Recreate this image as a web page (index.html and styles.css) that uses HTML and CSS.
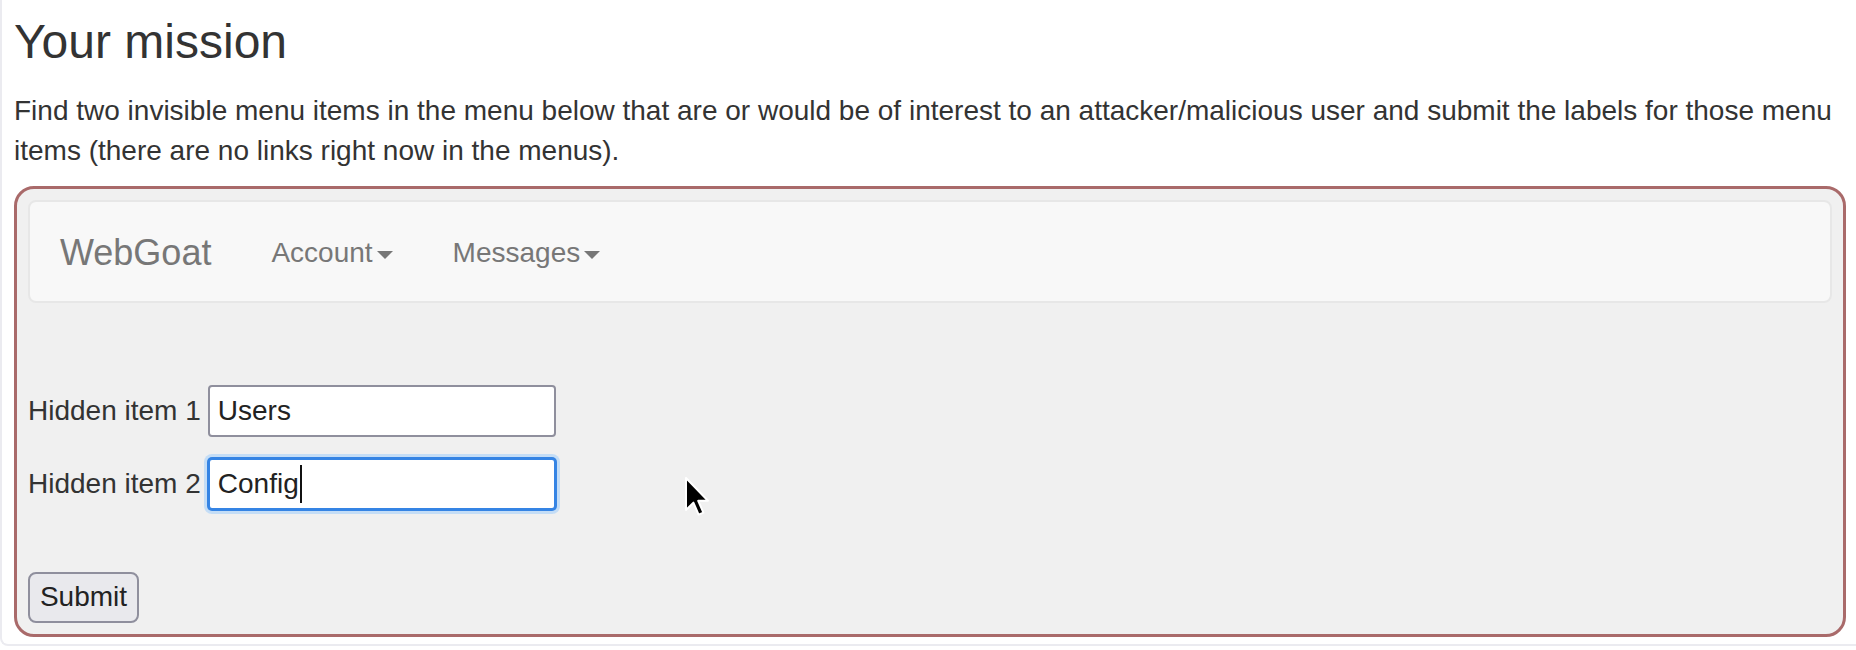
FILE: index.html
```html
<!DOCTYPE html>
<html lang="en">
<head>
<meta charset="utf-8">
<title>Your mission</title>
<link rel="stylesheet" href="styles.css">
</head>
<body>
<div class="page">
  <h3 class="title">Your mission</h3>
  <p class="intro">Find two invisible menu items in the menu below that are or would be of interest to an attacker/malicious user and submit the labels for those menu items (there are no links right now in the menus).</p>
  <div class="attack">
    <nav class="navbar">
      <span class="brand">WebGoat</span>
      <span class="nav-link">Account<span class="caret"></span></span>
      <span class="nav-link">Messages<span class="caret"></span></span>
    </nav>
    <form class="form">
      <div class="row">
        <label class="label">Hidden item 1</label>
        <span class="input">Users</span>
      </div>
      <div class="row">
        <label class="label">Hidden item 2</label>
        <span class="input focused">Config<span class="text-caret"></span></span>
      </div>
      <span class="button">Submit</span>
    </form>
    <svg class="pointer" width="26" height="42" viewBox="0 0 13 21">
      <path d="M0.5 0.5 L0.5 16.5 L4.2 12.8 L6.8 18.8 L9.2 17.8 L6.6 11.9 L11.5 11.9 Z" fill="#000" stroke="#fff" stroke-width="1" stroke-linejoin="round"/>
    </svg>
  </div>
</div>
</body>
</html>
```

FILE: styles.css
```css
html, body {
  margin: 0;
  padding: 0;
  background: #ffffff;
}

body {
  font-family: "Liberation Sans", Arial, sans-serif;
  font-size: 28px;
  line-height: 40px;
  color: #333333;
}

.page {
  height: 646px;
  box-sizing: border-box;
  border-left: 2px solid #ebebf0;
  border-bottom: 2px solid #ebebf0;
  border-bottom-left-radius: 8px;
  padding: 16px 10px 0 12px;
}

.title {
  margin: 0 0 22px 0;
  font-size: 48px;
  line-height: 52.8px;
  font-weight: 400;
  color: #333333;
}

.intro {
  margin: 0 0 15px 0;
  line-height: 40px;
}

.attack {
  position: relative;
  border: 3px solid #a96a6a;
  border-radius: 20px;
  background: #f0f0f0;
  padding: 11px 11px 12px 11px;
  height: 451px;
  box-sizing: border-box;
}

.navbar {
  display: flex;
  align-items: center;
  height: 103px;
  box-sizing: border-box;
  background: #f8f8f8;
  border: 2px solid #e7e7e7;
  border-radius: 8px;
  padding: 4px 30px 0 30px;
  margin-bottom: 82px;
}

.brand {
  font-size: 36px;
  line-height: 40px;
  color: #777777;
  padding-right: 30px;
}

.nav-link {
  font-size: 28px;
  line-height: 40px;
  color: #777777;
  padding: 0 30px;
  display: inline-flex;
  align-items: center;
}

.caret {
  display: inline-block;
  width: 0;
  height: 0;
  margin-left: 4px;
  margin-top: 4px;
  border-top: 8px solid #777777;
  border-left: 8px solid transparent;
  border-right: 8px solid transparent;
}

.form {
  display: flex;
  flex-direction: column;
  align-items: flex-start;
}

.row {
  display: flex;
  align-items: center;
  height: 52px;
  margin-bottom: 21px;
}

.label {
  margin-right: 7px;
  color: #333333;
}

.input {
  display: flex;
  align-items: center;
  width: 348px;
  height: 52px;
  box-sizing: border-box;
  background: #ffffff;
  border: 2px solid #8f8f9d;
  border-radius: 4px;
  padding: 0 8px;
  color: #222222;
}

.input.focused {
  border-color: #3584e4;
  box-shadow: 0 0 0 1px #3584e4, 0 0 0 4px #c4ddf6;
}

.text-caret {
  display: inline-block;
  width: 2px;
  height: 38px;
  background: #111111;
  margin-left: 1px;
}

.button {
  margin-top: 41px;
  display: inline-flex;
  align-items: center;
  justify-content: center;
  width: 111px;
  height: 51px;
  box-sizing: border-box;
  background: #e9e9ed;
  border: 2px solid #8f8f9d;
  border-radius: 8px;
  color: #222222;
}

.pointer {
  position: absolute;
  left: 668px;
  top: 288px;
}
```
